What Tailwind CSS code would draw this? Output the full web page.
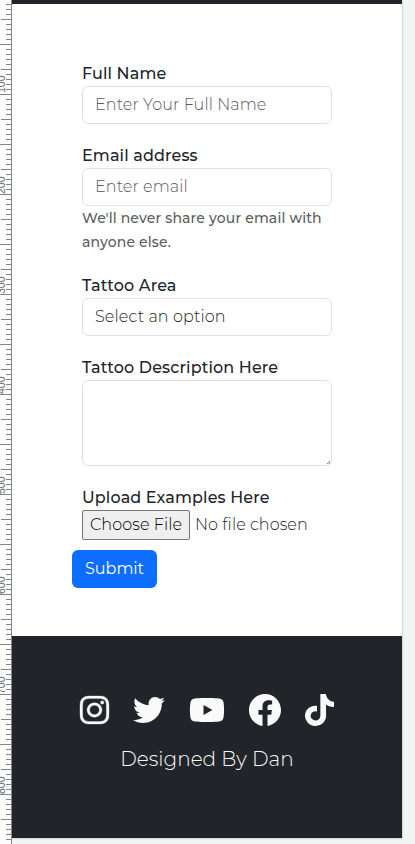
<!DOCTYPE html>
<html lang="en">
<head>
<meta charset="utf-8">
<meta name="viewport" content="width=device-width, initial-scale=1">
<title>Tattoo enquiry</title>
<script src="https://cdn.jsdelivr.net/npm/@tailwindcss/browser@4"></script>
</head>
<body class="flex h-[844px] w-[415px] overflow-hidden bg-[#f3f5f4] font-[Montserrat,Inter,sans-serif] text-base leading-6 text-[#212529]">
<svg class="h-[844px] w-3 shrink-0" viewBox="0 0 12 844" aria-hidden="true">
  <defs>
    <pattern id="ticks" width="12" height="50" patternUnits="userSpaceOnUse" y="-6">
      <path d="M0 0.5H12M6 5.5H12M6 10.5H12M6 15.5H12M6 20.5H12M1 25.5H12M6 30.5H12M6 35.5H12M6 40.5H12M6 45.5H12" stroke="#858585"/>
    </pattern>
  </defs>
  <rect width="12" height="844" fill="#fcfcfc"/>
  <rect y="4" width="12" height="840" fill="url(#ticks)"/>
  <path d="M11.5 0V844" stroke="#858585"/>
  <g fill="#666b70" font-family="Liberation Sans, sans-serif" font-size="10.5">
    <text transform="translate(5 93) rotate(-90)">100</text>
    <text transform="translate(5 194) rotate(-90)">200</text>
    <text transform="translate(5 294) rotate(-90)">300</text>
    <text transform="translate(5 394) rotate(-90)">400</text>
    <text transform="translate(5 494) rotate(-90)">500</text>
    <text transform="translate(5 594) rotate(-90)">600</text>
    <text transform="translate(5 694) rotate(-90)">700</text>
    <text transform="translate(5 794) rotate(-90)">800</text>
  </g>
</svg>
<div class="flex h-[838px] w-[390px] shrink-0 flex-col bg-white shadow-[1px_1px_1px_#d5d9d7]">
  <div class="h-1 shrink-0 bg-[#212529]"></div>
  <main class="h-[632px] shrink-0 px-[70px] pt-[58px]">
    <form>
      <div class="h-[82px]">
        <label for="name" class="block h-6 font-medium tracking-[0.13px]">Full Name</label>
        <input id="name" placeholder="Enter Your Full Name" class="block h-[38px] w-full rounded-md border border-[#dee2e6] px-3 pb-0.5 font-light tracking-[0.1px] placeholder:text-[#595c5f]">
      </div>
      <div class="h-[130px]">
        <label for="email" class="block h-6 font-medium tracking-[0.13px]">Email address</label>
        <input id="email" placeholder="Enter email" class="block h-[38px] w-full rounded-md border border-[#dee2e6] px-3 pb-0.5 font-light tracking-[0.1px] placeholder:text-[#595c5f]">
        <p class="text-sm leading-6 font-medium tracking-[0.15px] text-[#595c5f]"><span class="block whitespace-nowrap">We'll never share your email with</span><span class="block">anyone else.</span></p>
      </div>
      <div class="h-[82px]">
        <label for="area" class="block h-6 font-medium tracking-[0.13px]">Tattoo Area</label>
        <select id="area" class="block h-[38px] w-full appearance-none rounded-md border border-[#dee2e6] px-3 font-light tracking-[0.13px]"><option>Select an option</option></select>
      </div>
      <div class="h-[130px]">
        <label for="desc" class="block h-6 font-medium tracking-[0.13px]">Tattoo Description Here</label>
        <div class="relative">
          <textarea id="desc" class="block h-[86px] w-full resize-none rounded-md border border-[#dee2e6] px-3 py-1.5"></textarea>
          <svg class="absolute right-[2px] bottom-[2px] h-[3px] w-[3px]" viewBox="0 0 4 4" fill="none" stroke="#444" stroke-width=".9"><path d="M0 4L4 0M2.500 4L4 2.500"/></svg>
        </div>
      </div>
      <div class="h-[64px]">
        <span class="block h-6 font-medium tracking-[0.13px]">Upload Examples Here</span>
        <div class="flex h-[30px] items-center gap-[5px] font-light tracking-[0.08px] whitespace-nowrap">
          <button type="button" class="h-[30px] w-[108px] shrink-0 rounded-[2px] border border-[#767676] bg-[#efefef] tracking-[0.08px] text-black">Choose File</button>
          <span>No file chosen</span>
        </div>
      </div>
      <button type="button" class="-ml-[10px] h-[38px] w-[85px] rounded-md bg-[#0d6efd] text-white">Submit</button>
    </form>
  </main>
  <footer class="flex h-[202px] shrink-0 flex-col items-center bg-[#212529] pt-[58px] text-[#fafafa]">
    <div class="flex h-8 items-center gap-6">
      <svg class="h-8 w-[29px] overflow-visible" viewBox="0 0 448 512" preserveAspectRatio="none" fill="currentColor" stroke="currentColor" stroke-width="5"><path d="M224.1 141c-63.600 0-114.900 51.300-114.900 114.900s51.300 114.900 114.900 114.900S339 319.500 339 255.900 287.700 141 224.100 141zm0 189.600c-41.100 0-74.700-33.500-74.700-74.700s33.500-74.700 74.700-74.700 74.700 33.500 74.700 74.700-33.600 74.700-74.700 74.700zm146.400-194.300c0 14.900-12 26.800-26.800 26.800-14.900 0-26.800-12-26.800-26.800s12-26.800 26.800-26.800 26.800 12 26.800 26.800zm76.100 27.200c-1.700-35.900-9.900-67.700-36.200-93.900-26.200-26.200-58-34.400-93.900-36.200-37-2.100-147.900-2.100-184.900 0-35.800 1.700-67.600 9.900-93.900 36.100s-34.400 58-36.200 93.900c-2.100 37-2.100 147.900 0 184.900 1.700 35.900 9.900 67.700 36.200 93.900s58 34.400 93.900 36.200c37 2.100 147.900 2.100 184.900 0 35.900-1.700 67.700-9.900 93.900-36.200 26.200-26.200 34.400-58 36.200-93.900 2.100-37 2.100-147.800 0-184.800zM398.800 388c-7.800 19.600-22.900 34.700-42.600 42.600-29.500 11.700-99.500 9-132.100 9s-102.700 2.600-132.100-9c-19.600-7.800-34.700-22.900-42.600-42.600-11.700-29.500-9-99.500-9-132.100s-2.600-102.700 9-132.100c7.800-19.600 22.900-34.700 42.600-42.600 29.500-11.700 99.500-9 132.100-9s102.700-2.600 132.100 9c19.600 7.800 34.700 22.900 42.600 42.600 11.700 29.500 9 99.500 9 132.100s2.700 102.700-9 132.100z"/></svg>
      <svg class="h-8 w-8" viewBox="0 0 512 512" fill="currentColor"><path d="M459.370 151.716c.325 4.548.325 9.097.325 13.645 0 138.720-105.583 298.558-298.558 298.558-59.452 0-114.680-17.219-161.137-47.106 8.447.974 16.568 1.299 25.340 1.299 49.055 0 94.213-16.568 130.274-44.832-46.132-.975-84.792-31.188-98.112-72.772 6.498.974 12.995 1.624 19.818 1.624 9.421 0 18.843-1.300 27.614-3.573-48.081-9.747-84.143-51.980-84.143-102.985v-1.299c13.969 7.797 30.214 12.670 47.431 13.319-28.264-18.843-46.781-51.005-46.781-87.391 0-19.492 5.197-37.360 14.294-52.954 51.655 63.675 129.300 105.258 216.365 109.807-1.624-7.797-2.599-15.918-2.599-24.040 0-57.828 46.782-104.934 104.934-104.934 30.213 0 57.502 12.670 76.670 33.137 23.715-4.548 46.456-13.320 66.599-25.340-7.798 24.366-24.366 44.833-46.132 57.827 21.117-2.273 41.584-8.122 60.426-16.243-14.292 20.791-32.161 39.308-52.628 54.253z"/></svg>
      <svg class="h-8 w-9" viewBox="0 0 576 512" fill="currentColor"><path d="M549.655 124.083c-6.281-23.650-24.787-42.276-48.284-48.597C458.781 64 288 64 288 64S117.220 64 74.629 75.486c-23.497 6.322-42.003 24.947-48.284 48.597-11.412 42.867-11.412 132.305-11.412 132.305s0 89.438 11.412 132.305c6.281 23.650 24.787 41.500 48.284 47.821C117.220 448 288 448 288 448s170.780 0 213.371-11.486c23.497-6.321 42.003-24.171 48.284-47.821 11.412-42.867 11.412-132.305 11.412-132.305s0-89.438-11.412-132.305zm-317.510 213.508V175.185l142.739 81.205-142.739 81.201z"/></svg>
      <svg class="h-8 w-8" viewBox="0 0 16 16" fill="currentColor"><path d="M16 8.049c0-4.446-3.582-8.050-8-8.050C3.580 0-.002 3.603-.002 8.050c0 4.017 2.926 7.347 6.750 7.951v-5.625h-2.030V8.050H6.750V6.275c0-2.017 1.195-3.131 3.022-3.131.876 0 1.791.157 1.791.157v1.980h-1.009c-.993 0-1.303.621-1.303 1.258v1.510h2.218l-.354 2.326H9.250V16c3.824-.604 6.750-3.934 6.750-7.951z"/></svg>
      <svg class="h-8 w-[29px]" viewBox="0 0 448 512" preserveAspectRatio="none" fill="currentColor"><path d="M448 209.910a210.060 210.060 0 0 1-122.770-39.250v178.720A162.550 162.550 0 1 1 185 188.310v89.890a74.620 74.620 0 1 0 52.230 71.180V0h88a121.180 121.180 0 0 0 1.860 22.170A122.180 122.180 0 0 0 381 102.390a121.430 121.430 0 0 0 67 20.140z"/></svg>
    </div>
    <p class="mt-[18px] text-xl leading-[30px] font-light whitespace-nowrap">Designed By Dan</p>
  </footer>
</div>
</body>
</html>
